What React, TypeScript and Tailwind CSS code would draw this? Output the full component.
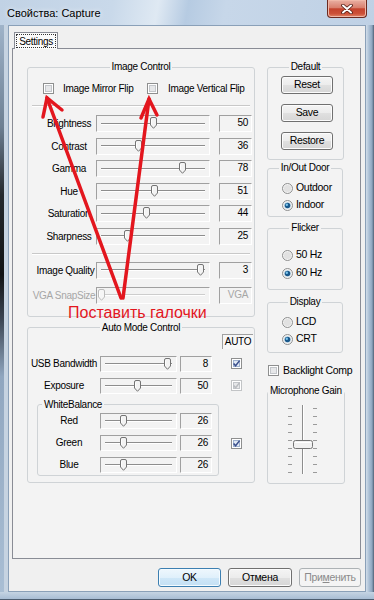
import React from "react";

type SliderRow = { label: string; value: string; f: number; pad: string; disabled?: boolean };

const imageRows: SliderRow[] = [
  { label: "Brightness", value: "50", f: 0.5, pad: "pl-[14px]" },
  { label: "Contrast", value: "36", f: 0.36, pad: "pl-[14px]" },
  { label: "Gamma", value: "78", f: 0.78, pad: "pl-[14px]" },
  { label: "Hue", value: "51", f: 0.51, pad: "pl-[14px]" },
  { label: "Saturation", value: "44", f: 0.44, pad: "pl-[14px]" },
  { label: "Sharpness", value: "25", f: 0.25, pad: "pl-[14px]" },
];

const qualityRows: SliderRow[] = [
  { label: "Image Quality", value: "3", f: 0.96, pad: "pl-[7px]" },
  { label: "VGA SnapSize", value: "VGA", f: 0, pad: "pl-[4px]", disabled: true },
];

const balanceRows = [
  { label: "Red", value: "26" },
  { label: "Green", value: "26" },
  { label: "Blue", value: "26" },
];

const Checkbox = ({ checked, disabled }: { checked?: boolean; disabled?: boolean }) => (
  <svg width="11" height="11" viewBox="0 0 11 11" className="shrink-0">
    <rect x="0.5" y="0.5" width="10" height="10" fill="#ffffff" stroke={disabled ? "#c2c4c6" : "#8e8f8f"} />
    <rect
      x="2.5"
      y="2.5"
      width="6"
      height="6"
      fill={checked && !disabled ? "#dfe8f4" : "#e6e7e9"}
      stroke={checked && !disabled ? "#9fb2cf" : "#c3c6ca"}
    />
    {checked && (
      <path
        d="M2.6 5.4 L4.6 7.8 L8.6 2.6"
        fill="none"
        stroke={disabled ? "#b9bcc0" : "#3b4f8c"}
        strokeWidth="1.5"
      />
    )}
  </svg>
);

const Radio = ({ checked }: { checked?: boolean }) => (
  <svg width="11" height="11" viewBox="0 0 11 11" className="shrink-0">
    <circle cx="5.5" cy="5.5" r="5" fill="#f3f3f3" stroke="#8e8f8f" />
    <circle cx="5.5" cy="5.5" r="3.6" fill={checked ? "#d9e6ee" : "#e1e1e1"} />
    {checked && (
      <>
        <circle cx="5.5" cy="5.5" r="2.8" fill="#19598c" />
        <circle cx="4.8" cy="4.7" r="1.2" fill="#7cc6ec" />
      </>
    )}
  </svg>
);

const Thumb = ({ left, disabled }: { left: number; disabled?: boolean }) => (
  <svg className="absolute top-[1px]" style={{ left }} width="7" height="12" viewBox="0 0 7 12">
    <path
      d="M0.5 2 Q0.5 0.5 2 0.5 H5 Q6.5 0.5 6.5 2 V8 L3.5 11.3 L0.5 8 Z"
      fill={disabled ? "#f6f6f6" : "#f3f3f3"}
      stroke={disabled ? "#bcbcbc" : "#747474"}
    />
    <path d="M1.5 2.5 V7.6" stroke="#ffffff" />
  </svg>
);

const HSlider = ({ w, f, len, disabled }: { w: string; f: number; len: number; disabled?: boolean }) => (
  <div
    className={`relative flex h-full shrink-0 items-center border border-t-[#a0a0a0] border-l-[#a0a0a0] border-b-white border-r-white px-[4px] ${w}`}
  >
    <div
      className={`h-[2px] w-full border-t border-b border-b-white ${disabled ? "border-t-[#cdcdcd]" : "border-t-[#8d8d8d]"}`}
    />
    <Thumb left={4 + f * len - 3.5} disabled={disabled} />
  </div>
);

const ValueBox = ({ v, w, disabled }: { v: string; w: string; disabled?: boolean }) => (
  <div
    className={`h-full shrink-0 border border-t-[#a0a0a0] border-l-[#a0a0a0] border-b-white border-r-white pr-[3px] text-right leading-[13px] ${w} ${disabled ? "text-[#a6a6a6]" : ""}`}
  >
    {v}
  </div>
);

const Group = ({
  title,
  className,
  left,
  children,
}: {
  title: string;
  className?: string;
  left?: boolean;
  children?: React.ReactNode;
}) => (
  <fieldset className={`rounded-[3px] border border-[#cfd3d6] ${className ?? ""}`}>
    <legend className={`${left ? "ml-[4px]" : "mx-auto"} whitespace-nowrap px-[2px] leading-[12px]`}>{title}</legend>
    {children}
  </fieldset>
);

const Btn = ({
  children,
  w,
  kind = "normal",
}: {
  children: React.ReactNode;
  w: string;
  kind?: "normal" | "default" | "disabled";
}) => {
  const look =
    kind === "default"
      ? "border-[#3c7fb1] bg-[linear-gradient(180deg,#eef7fd_0%,#e0f0fb_50%,#cfe7f8_51%,#c4e0f4_100%)] shadow-[inset_0_0_0_1px_#f4fbff]"
      : kind === "disabled"
        ? "border-[#adb2b5] bg-[#f4f4f4] text-[#8b8b8b]"
        : "border-[#707070] bg-[linear-gradient(180deg,#f4f4f4_0%,#ececec_50%,#e0e0e0_51%,#d6d6d6_100%)] shadow-[inset_0_0_0_1px_#fcfcfc]";
  return (
    <div className={`flex shrink-0 items-center justify-center rounded-[3px] border text-[10.5px] ${look} ${w}`}>
      {children}
    </div>
  );
};

const RadioRow = ({ label, checked, className }: { label: string; checked?: boolean; className?: string }) => (
  <div className={`flex h-[14px] items-center pl-[14px] ${className ?? ""}`}>
    <Radio checked={checked} />
    <span className="ml-[3px] text-[10.5px]">{label}</span>
  </div>
);

const MicSlider = () => {
  const ticks = [11, 19, 27, 35, 43, 51, 59, 67, 75];
  return (
    <svg width="75" height="86" viewBox="0 0 75 86">
      {ticks.map((y) => (
        <g key={y}>
          <line x1="20" y1={y + 0.5} x2="24" y2={y + 0.5} stroke="#9a9a9a" />
          <line x1="45" y1={y + 0.5} x2="49" y2={y + 0.5} stroke="#9a9a9a" />
        </g>
      ))}
      <line x1="34.5" y1="8" x2="34.5" y2="77" stroke="#8d8d8d" />
      <line x1="35.5" y1="8" x2="35.5" y2="77" stroke="#ffffff" />
      <rect x="25.5" y="43.5" width="19" height="8" rx="2" fill="#f1f1f1" stroke="#747474" />
      <line x1="27" y1="45.5" x2="43" y2="45.5" stroke="#ffffff" />
    </svg>
  );
};

export default function App() {
  return (
    <div className="relative flex h-[600px] w-[374px] flex-col overflow-hidden bg-[linear-gradient(180deg,#c8d9ea_0%,#bdd0e4_8%,#b2c6dc_100%)] font-['Liberation_Sans',Arial,sans-serif] text-[10px] text-black">
      {/* title bar */}
      <div className="flex h-[25px] shrink-0 items-start bg-[linear-gradient(100deg,#c1d2e5_0%,#c9d9ea_30%,#dfe9f3_42%,#b6cbe2_50%,#c7d7e9_60%,#bfd1e5_100%)]">
        <span className="ml-[7px] mt-[7px] text-[11px] leading-[13px] [text-shadow:0_0_5px_#ffffff]">
          Свойства: Capture
        </span>
        <div className="ml-auto mr-[7px] flex h-[18px] w-[40px] items-center justify-center rounded-b-[4px] border border-t-0 border-[#6b2a20] bg-[linear-gradient(180deg,#e9b0a3_0%,#d9806e_45%,#c4432d_52%,#cc5138_80%,#e28567_100%)] shadow-[inset_0_0_0_1px_#f0b8a8]">
          <svg width="12" height="10" viewBox="0 0 12 10">
            <path d="M2 1.5 L10 8.5 M10 1.5 L2 8.5" stroke="#4d1a12" strokeWidth="3.6" strokeLinecap="round" />
            <path d="M2 1.5 L10 8.5 M10 1.5 L2 8.5" stroke="#ffffff" strokeWidth="2" strokeLinecap="round" />
          </svg>
        </div>
      </div>

      <div className="flex min-h-0 flex-1">
        {/* left glass frame */}
        <div className="w-[8px] shrink-0 border-r-[4px] border-r-[#c6d3e1] bg-[linear-gradient(180deg,#9fb3c9_0%,#6d7f92_18%,#25292e_30%,#111315_44%,#3d4755_52%,#90a6bf_62%,#a9bed4_100%)]" />

        {/* client area */}
        <div className="flex min-w-0 flex-1 flex-col border border-[#8aa0b8] bg-[#f0f0f0] tracking-[-0.3px]">
          {/* tab */}
          <div className="relative z-10 -mb-px ml-[5px] mt-[6px] h-[17px] w-[44px] border border-b-0 border-[#898c95] bg-[#fbfbfb] p-[1px]">
            <div className="flex h-full items-center justify-center border border-dotted border-[#333333] leading-[11px]">
              Settings
            </div>
          </div>

          {/* tab panel */}
          <div className="ml-[3px] mr-[4px] flex h-[511px] shrink-0 gap-[12px] border border-[#898c95] bg-[#f3f3f3] pl-[14px] pt-[12px]">
            {/* left column */}
            <div className="flex w-[228px] shrink-0 flex-col">
              <Group title="Image Control" className="w-[228px] pb-[12px]">
                <div className="mt-[10px] flex h-[11px] items-center pl-[15px]">
                  <div className="flex w-[104px] items-center">
                    <Checkbox />
                    <span className="ml-[9px] whitespace-nowrap">Image Mirror Flip</span>
                  </div>
                  <Checkbox />
                  <span className="ml-[10px] whitespace-nowrap">Image Vertical Flip</span>
                </div>
                <div className="mx-[4px] mt-[11px] h-[2px] border-t border-b border-t-[#c8c8c8] border-b-white" />
                <div className="mt-[8px] flex flex-col gap-[5.6px]">
                  {imageRows.map((r) => (
                    <div key={r.label} className="flex h-[17px] items-center">
                      <span className={`w-[68px] shrink-0 whitespace-nowrap text-center ${r.pad}`}>{r.label}</span>
                      <HSlider w="w-[114px]" f={r.f} len={104} />
                      <ValueBox v={r.value} w="ml-[9px] w-[33px]" />
                    </div>
                  ))}
                </div>
                <div className="mx-[4px] mt-[8px] h-[2px] border-t border-b border-t-[#c8c8c8] border-b-white" />
                <div className="mt-[7px] flex flex-col gap-[8px]">
                  {qualityRows.map((r) => (
                    <div key={r.label} className="flex h-[17px] items-center">
                      <span
                        className={`w-[68px] shrink-0 whitespace-nowrap text-center ${r.pad} ${r.disabled ? "text-[#a6a6a6]" : ""}`}
                      >
                        {r.label}
                      </span>
                      <HSlider w="w-[114px]" f={r.f} len={104} disabled={r.disabled} />
                      <ValueBox v={r.value} w="ml-[9px] w-[33px]" disabled={r.disabled} />
                    </div>
                  ))}
                </div>
              </Group>

              <Group title="Auto Mode Control" className="mt-[5px] w-[228px] pb-[6px]">
                <div className="flex h-[16px] justify-end pr-[1px]">
                  <div className="flex h-[15px] w-[31px] items-center justify-center border-l border-t border-l-[#a0a0a0] border-t-[#a0a0a0] bg-[#f7f7f7] leading-[13px]">
                    AUTO
                  </div>
                </div>
                <div className="mt-[6px] flex h-[16px] items-center">
                  <span className="w-[72px] shrink-0 whitespace-nowrap text-center">USB Bandwidth</span>
                  <HSlider w="w-[77px]" f={0.94} len={67} />
                  <ValueBox v="8" w="ml-[3px] w-[32px]" />
                  <div className="ml-[19px]">
                    <Checkbox checked />
                  </div>
                </div>
                <div className="mt-[6px] flex h-[16px] items-center">
                  <span className="w-[72px] shrink-0 whitespace-nowrap text-center">Exposure</span>
                  <HSlider w="w-[77px]" f={0.49} len={67} />
                  <ValueBox v="50" w="ml-[3px] w-[32px]" />
                  <div className="ml-[19px]">
                    <Checkbox checked disabled />
                  </div>
                </div>
                <div className="mt-[5px] flex items-start">
                  <Group title="WhiteBalance" left className="ml-[9px] w-[182px] pb-[2px]">
                    <div className="mt-[2px] flex flex-col gap-[6px]">
                      {balanceRows.map((r) => (
                        <div key={r.label} className="flex h-[16px] items-center">
                          <span className="w-[62px] shrink-0 text-center">{r.label}</span>
                          <HSlider w="w-[77px]" f={0.28} len={67} />
                          <ValueBox v={r.value} w="ml-[3px] w-[32px]" />
                        </div>
                      ))}
                    </div>
                  </Group>
                  <div className="ml-[12px] mt-[39px]">
                    <Checkbox checked />
                  </div>
                </div>
              </Group>
            </div>

            {/* right column */}
            <div className="flex w-[77px] shrink-0 flex-col">
              <Group title="Default" className="w-[77px] pb-[9px]">
                <div className="flex flex-col gap-[10px] pl-[13px] pt-[3px]">
                  <Btn w="h-[18px] w-[52px]">Reset</Btn>
                  <Btn w="h-[18px] w-[52px]">Save</Btn>
                  <Btn w="h-[18px] w-[52px]">Restore</Btn>
                </div>
              </Group>
              <Group title="In/Out Door" className="mt-[2px] w-[76px] pb-[4px]">
                <RadioRow label="Outdoor" className="mt-[7px]" />
                <RadioRow label="Indoor" checked className="mt-[3px]" />
              </Group>
              <Group title="Flicker" className="mt-[5px] w-[76px] pb-[9px]">
                <RadioRow label="50 Hz" className="mt-[14px]" />
                <RadioRow label="60 Hz" checked className="mt-[4px]" />
              </Group>
              <Group title="Display" className="mt-[6px] w-[76px] pb-[6px]">
                <RadioRow label="LCD" className="mt-[7px]" />
                <RadioRow label="CRT" checked className="mt-[3px]" />
              </Group>
              <div className="mt-[12px] flex h-[11px] items-center pl-[1px]">
                <Checkbox />
                <span className="ml-[4px] whitespace-nowrap text-[10.5px]">Backlight Comp</span>
              </div>
              <Group title="Microphone Gain" className="mt-[9px] w-[76px]">
                <MicSlider />
              </Group>
            </div>
          </div>

          {/* dialog buttons */}
          <div className="mt-[9px] flex justify-end gap-[7px] pr-[4px]">
            <Btn w="h-[19px] w-[63px]" kind="default">
              OK
            </Btn>
            <Btn w="h-[19px] w-[64px]">Отмена</Btn>
            <Btn w="h-[19px] w-[62px]" kind="disabled">
              При<span className="underline">м</span>енить
            </Btn>
          </div>
        </div>

        {/* right glass frame */}
        <div className="w-[8px] shrink-0 bg-[linear-gradient(90deg,#d2deea_0%,#a9bed4_40%,#8ea6c0_75%,#4e6075_100%)]" />
      </div>

      {/* bottom glass frame */}
      <div className="h-[8px] shrink-0 border-b border-b-[#4c5d70] bg-[linear-gradient(180deg,#c5d4e3_0%,#a8bdd4_100%)]" />

      {/* red annotation over the screenshot */}
      <svg className="pointer-events-none absolute left-0 top-0" width="374" height="600" viewBox="0 0 374 600">
        <g stroke="#e3161e" strokeWidth="3.5" strokeLinecap="round" fill="none">
          <path d="M121 298 L47 98" />
          <path d="M43 117 L47 98 L62 110" />
          <path d="M123 298 L149 99" />
          <path d="M141 118 L149 99 L157 115" />
        </g>
      </svg>
      <span className="absolute left-[68px] top-[307px] whitespace-nowrap text-[16px] leading-[11px] text-[#e3161e]">
        Поставить галочки
      </span>
    </div>
  );
}
